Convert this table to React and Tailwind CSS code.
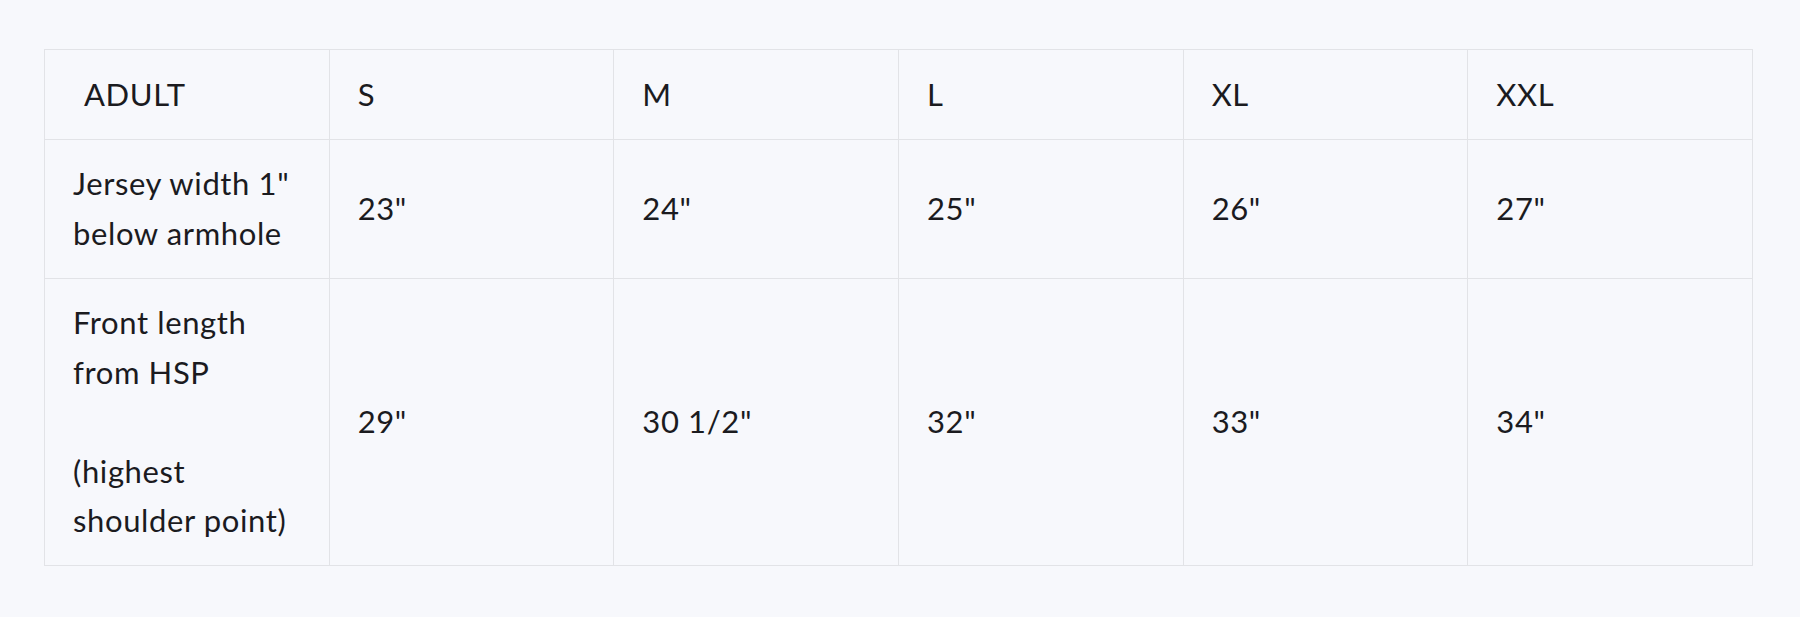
const sizes = ['S', 'M', 'L', 'XL', 'XXL']

const rows = [
  {
    label: ['Jersey width 1"', 'below armhole'],
    values: ['23"', '24"', '25"', '26"', '27"'],
  },
  {
    label: ['Front length', 'from HSP', '', '(highest', 'shoulder point)'],
    values: ['29"', '30 1/2"', '32"', '33"', '34"'],
  },
]

const cell =
  'border border-[#e2e3e7] pl-[28px] pr-[20px] py-[19.5px] align-middle text-left font-normal'

export default function App() {
  return (
    <div
      className="min-h-screen bg-[#f7f8fc] pl-[44px] pt-[49px] text-[#1b1b1f]"
      style={{ fontFamily: 'Lato, "Noto Sans", sans-serif' }}
    >
      <table className="w-[1709px] table-fixed border-collapse text-[31px] leading-[49.5px] tracking-[0.02em]">
        <thead>
          <tr>
            <th className={cell}>
              <span className="ml-[11px]">ADULT</span>
            </th>
            {sizes.map((s) => (
              <th key={s} className={cell}>
                {s}
              </th>
            ))}
          </tr>
        </thead>
        <tbody>
          {rows.map((r, i) => (
            <tr key={i}>
              <td className={cell}>
                {r.label.map((line, j) => (
                  <div key={j}>{line || '\u00a0'}</div>
                ))}
              </td>
              {r.values.map((v, j) => (
                <td key={j} className={cell}>
                  {v}
                </td>
              ))}
            </tr>
          ))}
        </tbody>
      </table>
    </div>
  )
}
